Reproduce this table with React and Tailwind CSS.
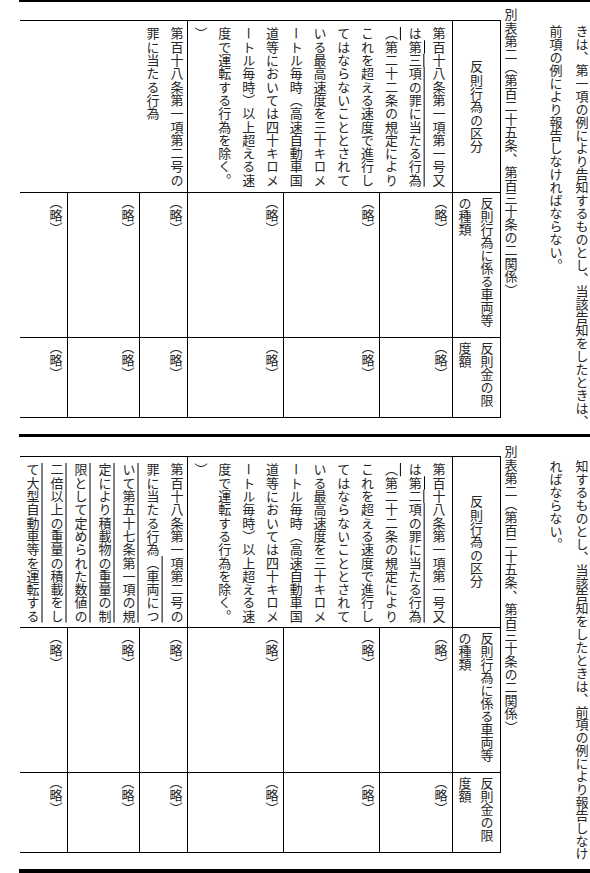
import clsx from "clsx";

// 傍線 (sideline on the right of vertical text)
const Mark = ({ children }) => (
  <span className="underline decoration-black decoration-[1px] underline-offset-[1px] [text-underline-position:right]">
    {children}
  </span>
);

const Col = ({ children, className }) => (
  <div className={clsx("[writing-mode:vertical-rl] whitespace-nowrap text-[13px] leading-none", className)}>
    {children}
  </div>
);

const Lines = ({ lines, gap, track }) => (
  <div className={clsx("flex flex-row-reverse items-start", gap)}>
    {lines.map((l, i) => (
      <Col key={i} className={track}>
        {l}
      </Col>
    ))}
  </div>
);

const speedLines = (n) => [
  "第百十八条第一項第一号又",
  <>
    は<Mark>第{n}項の罪に当たる行為</Mark>
  </>,
  <>
    <Mark>（</Mark>第二十二条の規定により
  </>,
  "これを超える速度で進行し",
  "てはならないこととされて",
  "いる最高速度を三十キロメ",
  "ートル毎時（高速自動車国",
  "道等においては四十キロメ",
  "ートル毎時）以上超える速",
  "度で運転する行為を除く。",
  "）",
];

const Omit = () => (
  <div className="border-r border-b border-black flex justify-end pr-[4.5px] pt-[3px]">
    <Col>（略）</Col>
  </div>
);

const Table = ({ rowsClass, left, right }) => (
  <div
    className={clsx(
      "grid w-[481px] grid-cols-[48px_72px_48px_96px_96px_73px_48px] border-t border-black",
      rowsClass
    )}
  >
    <div className="col-span-3 border-r border-b border-black flex justify-end pr-[3.5px] pt-[6px]">
      <Lines lines={left} gap="gap-[11px]" track="tracking-[0.3px]" />
    </div>
    <div className="col-span-3 border-r border-b border-black flex justify-end pr-[6.5px] pt-[6px]">
      <Lines lines={right} gap="gap-[10.8px]" track="tracking-[0.3px]" />
    </div>
    <div className="border-r border-b border-black flex items-center justify-center">
      <Col className="tracking-[0.3px]">反則行為の区分</Col>
    </div>

    {[0, 1, 2, 3, 4, 5].map((i) => (
      <Omit key={i} />
    ))}
    <div className="border-r border-b border-black flex justify-end pr-[6.5px] pt-[4px]">
      <Lines lines={["反則行為に係る車両等", "の種類"]} gap="gap-[9px]" />
    </div>

    {[0, 1, 2, 3, 4, 5].map((i) => (
      <Omit key={i} />
    ))}
    <div className="border-r border-b border-black flex justify-end pr-[6.5px] pt-[4px]">
      <Lines lines={["反則金の限", "度額"]} gap="gap-[9px]" />
    </div>
  </div>
);

export default function App() {
  return (
    <div className="w-[590px] h-[873px] overflow-hidden bg-white text-[#262626] font-['Noto_Sans_CJK_JP',sans-serif]">
      {/* 上段 */}
      <div className="h-[2px] ml-[19px] bg-black" />
      <div className="flex items-start h-[432px]">
        <div className="ml-[20px] mt-[18px]">
          <Table
            rowsClass="grid-rows-[172px_145px_80px]"
            left={["第百十八条第一項第二号の", "罪に当たる行為"]}
            right={speedLines("三")}
          />
        </div>
        <div className="w-[20px] mt-[6px] flex justify-center">
          <Col className="tracking-[0.1px]">別表第二（第百二十五条、第百三十条の二関係）</Col>
        </div>
        <div className="flex-1 flex flex-row-reverse gap-[13px] pr-[1.5px] mt-[23px]">
          <Col>きは、第一項の例により告知するものとし、当該告知をしたときは、</Col>
          <Col>前項の例により報告しなければならない。</Col>
        </div>
      </div>

      {/* 下段 */}
      <div className="h-[3px] ml-[19px] bg-black" />
      <div className="flex items-start h-[432px]">
        <div className="ml-[20px] mt-[19px]">
          <Table
            rowsClass="grid-rows-[171px_145px_80px]"
            left={[
              "第百十八条第一項第二号の",
              <>
                罪に当たる行為<Mark>（車両につ</Mark>
              </>,
              <Mark>いて第五十七条第一項の規</Mark>,
              <Mark>定により積載物の重量の制</Mark>,
              <Mark>限として定められた数値の</Mark>,
              <Mark>二倍以上の重量の積載をし</Mark>,
              <Mark>て大型自動車等を運転する</Mark>,
            ]}
            right={speedLines("二")}
          />
        </div>
        <div className="w-[20px] mt-[8px] flex justify-center">
          <Col className="tracking-[0.1px]">別表第二（第百二十五条、第百三十条の二関係）</Col>
        </div>
        <div className="flex-1 flex flex-row-reverse gap-[13px] pr-[1.5px] mt-[23px]">
          <Col className="tracking-[-0.1px]">知するものとし、当該告知をしたときは、前項の例により報告しなけ</Col>
          <Col>ればならない。</Col>
        </div>
      </div>
      <div className="h-[4px] ml-[19px] bg-black" />
    </div>
  );
}
